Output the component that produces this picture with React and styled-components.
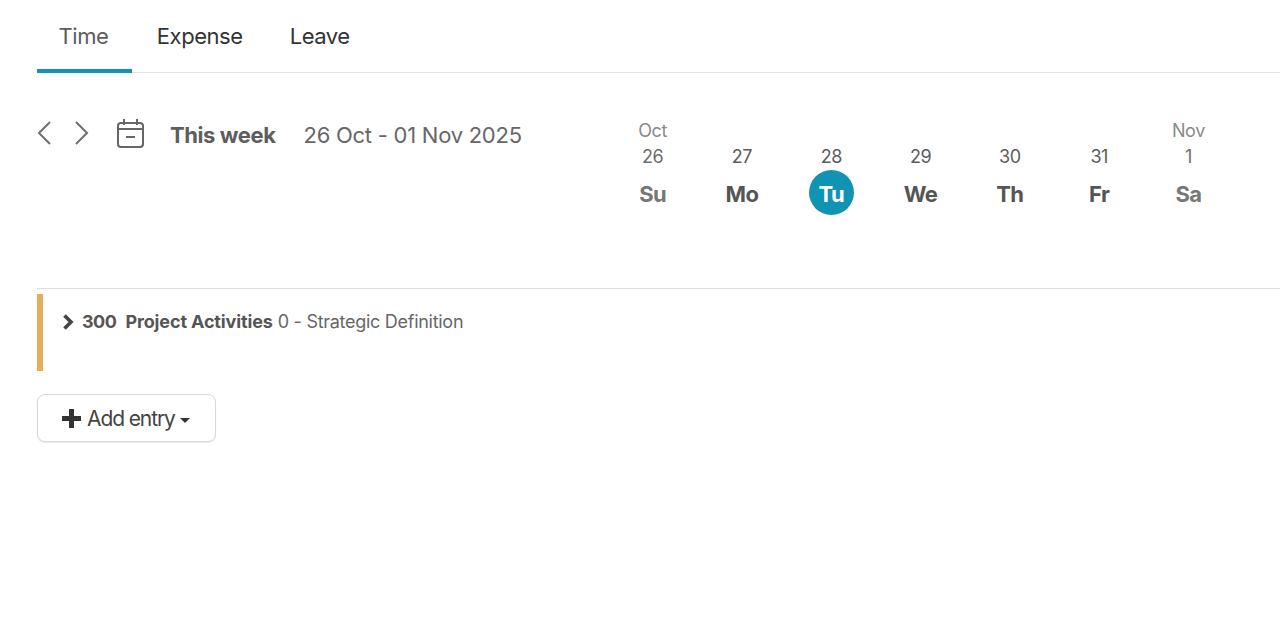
import React from 'react';
import styled, { createGlobalStyle } from 'styled-components';

const GlobalStyle = createGlobalStyle`
  html, body { margin: 0; padding: 0; background: #fff; }
  body { font-family: "Inter", "Liberation Sans", sans-serif; color: #555; overflow: hidden; }
`;

const Page = styled.div`
  width: 1280px;
  height: 626px;
  padding-left: 37px;
  box-sizing: border-box;
`;

const Tabs = styled.nav`
  display: flex;
  height: 73px;
  border-bottom: 1px solid #e3e3e3;
  box-sizing: border-box;
`;

const Tab = styled.div`
  height: 73px;
  box-sizing: border-box;
  padding: 23px ${({ $first }) => ($first ? '23.5px' : '24px')} 0 ${({ $first }) => ($first ? '21.5px' : '25px')};
  margin-right: ${({ $first }) => ($first ? '0' : '-2px')};
  font-size: 22px;
  line-height: 27px;
  letter-spacing: -0.45px;
  color: ${({ $active }) => ($active ? '#5c5c5c' : '#333')};
  border-bottom: ${({ $active }) => ($active ? '4px solid #1193b3' : 'none')};
`;

const Toolbar = styled.section`
  display: flex;
  height: 216px;
  border-bottom: 1px solid #dedede;
  box-sizing: border-box;
`;

const WeekNav = styled.div`
  display: flex;
  align-items: center;
  align-self: flex-start;
  width: 571px;
  height: 32px;
  margin-top: 45px;
`;

const Arrow = styled.svg`
  width: 16px;
  height: 26px;
  margin: 0 ${({ $gap }) => $gap}px 2px 0;
  fill: none;
  stroke: #6f6f6f;
  stroke-width: 2;
`;

const CalendarIcon = styled.svg`
  width: 28px;
  height: 30px;
  margin: 0 26px 2px 0;
  fill: none;
  stroke: #666;
  stroke-width: 2;
`;

const WeekLabel = styled.strong`
  padding-top: 2px;
  font-size: 22px;
  font-weight: 700;
  letter-spacing: -0.42px;
  color: #5d5d5d;
  margin-right: 28px;
`;

const WeekRange = styled.span`
  padding-top: 2px;
  font-size: 22px;
  letter-spacing: -0.25px;
  color: #666;
`;

const Days = styled.div`
  display: grid;
  grid-template-columns: repeat(7, 89.3px);
  align-self: flex-start;
  margin-top: 47px;
`;

const Day = styled.div`
  display: flex;
  flex-direction: column;
  align-items: center;
`;

const Month = styled.div`
  height: 22px;
  font-size: 18px;
  line-height: 22px;
  letter-spacing: -0.35px;
  color: #8a8a8a;
`;

const DayNumber = styled.div`
  height: 26px;
  font-size: 18px;
  line-height: 30px;
  letter-spacing: -0.5px;
  color: ${({ $muted }) => ($muted ? '#6e6e6e' : '#5c5c5c')};
`;

const DayName = styled.div`
  width: 45px;
  height: 45px;
  margin-top: 2px;
  padding-top: 2px;
  box-sizing: border-box;
  border-radius: 50%;
  display: flex;
  align-items: center;
  justify-content: center;
  font-size: 22px;
  font-weight: 700;
  letter-spacing: -0.6px;
  background: ${({ $today }) => ($today ? '#1193b3' : 'transparent')};
  color: ${({ $today, $muted }) => ($today ? '#fff' : $muted ? '#777' : '#555')};
`;

const ProjectRow = styled.div`
  display: flex;
  align-items: center;
  align-self: flex-start;
  height: 77px;
  margin-top: 5px;
  padding: 0 0 22px 19px;
  border-left: 6px solid #e5ae5b;
  box-sizing: border-box;
  font-size: 18px;
  letter-spacing: -0.28px;
  color: #666;
`;

const Caret = styled.svg`
  width: 13px;
  height: 16px;
  margin-right: 7px;
  fill: none;
  stroke: #444;
  stroke-width: 3.6;
`;

const Code = styled.strong`
  color: #555;
  letter-spacing: -0.5px;
  margin-right: 9px;
`;

const ProjectName = styled.strong`
  color: #555;
  letter-spacing: -0.13px;
  margin-right: 5px;
`;

const AddButton = styled.button`
  display: flex;
  align-items: center;
  width: 179px;
  height: 48px;
  margin-top: 23px;
  padding: 0 0 0 24px;
  background: #fff;
  border: 1px solid #d9d9d9;
  border-radius: 8px;
  box-shadow: 0 1px 1px rgba(0, 0, 0, 0.08);
  box-sizing: border-box;
  font-family: inherit;
  font-size: 21px;
  letter-spacing: -1.1px;
  color: #444;
`;

const PlusIcon = styled.svg`
  width: 19px;
  height: 19px;
  margin-right: 6px;
  flex-shrink: 0;
  stroke: #333;
  stroke-width: 5;
`;

const DropCaret = styled.span`
  width: 0;
  height: 0;
  margin: 4px 0 0 5px;
  border-left: 5.5px solid transparent;
  border-right: 5.5px solid transparent;
  border-top: 5px solid #333;
`;

const days = [
  { month: 'Oct', num: '26', name: 'Su', muted: true },
  { num: '27', name: 'Mo' },
  { num: '28', name: 'Tu', today: true },
  { num: '29', name: 'We' },
  { num: '30', name: 'Th' },
  { num: '31', name: 'Fr' },
  { month: 'Nov', num: '1', name: 'Sa', muted: true },
];

const App = () => {
  return (
    <>
      <GlobalStyle />
      <Page>
        <Tabs>
          <Tab $first $active>Time</Tab>
          <Tab>Expense</Tab>
          <Tab>Leave</Tab>
        </Tabs>
        <Toolbar>
          <WeekNav>
            <Arrow viewBox="0 0 16 26" $gap={21}><path d="M13 2 2 13l11 11" /></Arrow>
            <Arrow viewBox="0 0 16 26" $gap={26}><path d="M2 2l11 11L2 24" /></Arrow>
            <CalendarIcon viewBox="0 0 28 30">
              <rect x="2" y="5" width="25" height="24" rx="3" />
              <path d="M2 11h25M8 1v6M21 1v6M10 19h9" />
            </CalendarIcon>
            <WeekLabel>This week</WeekLabel>
            <WeekRange>26 Oct - 01 Nov 2025</WeekRange>
          </WeekNav>
          <Days>
            {days.map((d) => (
              <Day key={d.num}>
                <Month>{d.month}</Month>
                <DayNumber $muted={d.muted}>{d.num}</DayNumber>
                <DayName $today={d.today} $muted={d.muted}>{d.name}</DayName>
              </Day>
            ))}
          </Days>
        </Toolbar>
        <ProjectRow>
          <Caret viewBox="0 0 13 16"><path d="M2.5 1.5 9 8l-6.5 6.5" /></Caret>
          <Code>300</Code>
          <ProjectName>Project Activities</ProjectName>
          0 - Strategic Definition
        </ProjectRow>
        <AddButton>
          <PlusIcon viewBox="0 0 19 19"><path d="M9.5 0v19M0 9.5h19" /></PlusIcon>
          Add entry
          <DropCaret />
        </AddButton>
      </Page>
    </>
  );
};

export default App;
